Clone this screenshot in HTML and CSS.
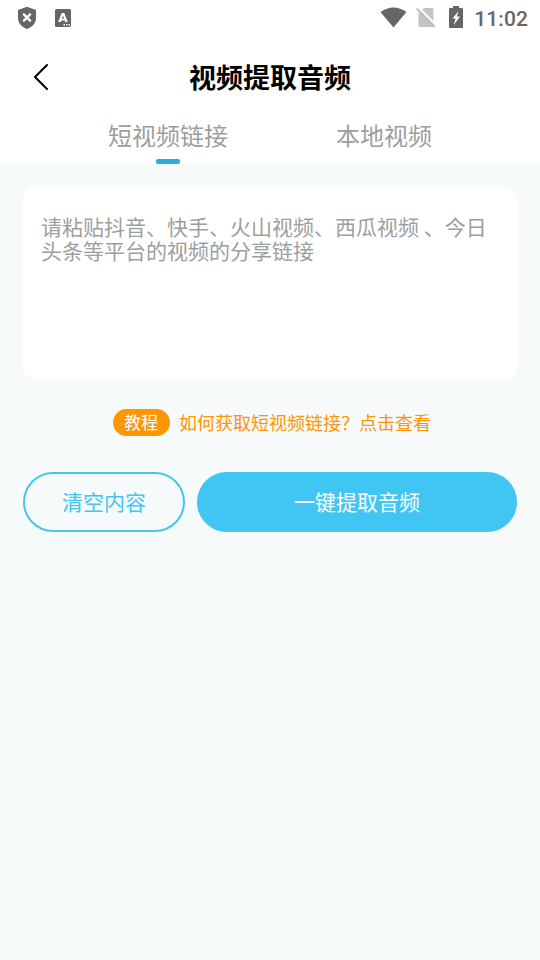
FILE: index.html
```html
<!DOCTYPE html>
<html lang="zh-CN">
<head>
<meta charset="utf-8">
<title>视频提取音频</title>
<link rel="stylesheet" href="styles.css">
</head>
<body>
<header class="header">
  <div class="status">
    <svg class="shield" width="20" height="24" viewBox="0 0 20 24"><path fill="#666" d="M10 .8 19 4v8c0 5.200-4 9.400-9 11-5-1.600-9-5.800-9-11V4z"/><path stroke="#fff" stroke-width="2.300" stroke-linecap="round" d="m6.900 8.400 6.200 6.200m0-6.200-6.200 6.200"/></svg>
    <svg class="letter" width="16" height="18" viewBox="0 0 16 18"><rect width="16" height="18" rx="1.500" fill="#666"/><path fill="#fff" fill-rule="evenodd" d="M6.700 4h2.600l3.500 9h-2.600l-.5-1.500H6.300L5.800 13H3.200zM8 6.700 6.900 9.800h2.200z"/><path stroke="#fff" stroke-width="1.500" stroke-dasharray="1.500 1" d="M8.500 15.800H15"/></svg>
    <span class="spacer"></span>
    <svg class="wifi" width="27" height="21" viewBox="0 0 27 21"><path fill="#666" d="M.5 5Q13.500-4 26.500 5L13.500 20.500z"/></svg>
    <svg class="sim" width="20" height="22" viewBox="0 0 20 22"><path fill="#c3c4c5" d="M8 1h8q1.500 0 1.500 1.500V19q0 1-1 1H4q-1.500 0-1.500-1.500V6.500z"/><path stroke="#fff" stroke-width="2" d="m2 0 18 18"/><path stroke="#bdbebf" stroke-width="1.800" d="m.7 1.500 18 18.500"/></svg>
    <svg class="battery" width="14" height="22" viewBox="0 0 14 22"><path fill="#666" d="M4 0h6v2h3q1 0 1 1v18q0 1-1 1H1q-1 0-1-1V3q0-1 1-1h3z"/><path fill="#fff" d="M9.500 5 3.500 12.500h3L4.800 19 11 10.500H7.800z"/></svg>
    <time class="time">11:02</time>
  </div>
  <div class="titlebar">
    <svg class="back" width="16" height="28" viewBox="0 0 16 28"><path fill="none" stroke="#000" stroke-width="2" stroke-linecap="round" stroke-linejoin="round" d="M14 2 2 14l12 12"/></svg>
    <h1 class="title">视频提取音频</h1>
  </div>
  <nav class="tabs">
    <div class="tab active">短视频链接</div>
    <div class="tab">本地视频</div>
  </nav>
</header>
<main class="main">
  <div class="input">请粘贴抖音、快手、火山视频、西瓜视频 、今日头条等平台的视频的分享链接</div>
  <div class="tip"><span class="badge">教程</span><span>如何获取短视频链接？点击查看</span></div>
  <div class="actions">
    <button class="btn clear">清空内容</button>
    <button class="btn extract">一键提取音频</button>
  </div>
</main>
</body>
</html>
```
FILE: styles.css
```css
* { box-sizing: border-box; }
body {
  margin: 0;
  min-height: 960px;
  background: #f6fafb;
  font-family: "Noto Sans CJK SC", sans-serif;
}
.header { height: 164px; background: #fff; }
.status { height: 36px; display: flex; align-items: center; padding: 0 12px 0 17px; }
.letter { margin-left: 18px; }
.spacer { flex: 1; }
.sim { margin-left: 9px; }
.battery { margin: 0 11px 2px 13px; }
.wifi { margin-bottom: 1px; }
.time { font: 500 21px/36px Roboto, sans-serif; color: #666; padding-top: 2px; letter-spacing: .1px; }
.titlebar {
  height: 82px;
  display: grid;
  grid-template-columns: 48px 1fr 48px;
  align-items: center;
}
.back { margin-left: 33px; }
.title { margin: 0; text-align: center; font-size: 27px; line-height: 40px; font-weight: 700; color: #000; }
.tabs { height: 46px; display: flex; justify-content: center; gap: 108px; }
.tab {
  display: flex;
  flex-direction: column;
  align-items: center;
  justify-content: space-between;
  font-size: 24px;
  line-height: 34px;
  color: #9b9fa0;
}
.active::after { content: ""; width: 24px; height: 5px; border-radius: 2px; background: #27addd; }
.main { padding: 23px 23px 0; }
.input {
  height: 192px;
  padding: 27px 18px;
  border-radius: 12px;
  background: #fff;
  font-size: 21px;
  line-height: 24px;
  color: #9b9fa0;
}
.tip {
  display: flex;
  justify-content: center;
  align-items: center;
  gap: 9px;
  height: 27px;
  margin: 30px 0 36px 4px;
  font-size: 18px;
  line-height: 27px;
  color: #ff9500;
}
.badge { width: 57px; height: 27px; border-radius: 14px; padding-right: 1px; background: #ff9500; color: #fff; font-size: 17px; line-height: 26px; text-align: center; }
.actions { display: flex; gap: 12px; }
.btn {
  height: 60px;
  padding: 0 0 2px;
  border: 2px solid #41c6f4;
  border-radius: 30px;
  font: 21px/30px "Noto Sans CJK SC", sans-serif;
}
.clear { width: 162px; background: transparent; color: #41c6f4; }
.extract { flex: 1; background: #41c6f4; color: #fff; }
```
